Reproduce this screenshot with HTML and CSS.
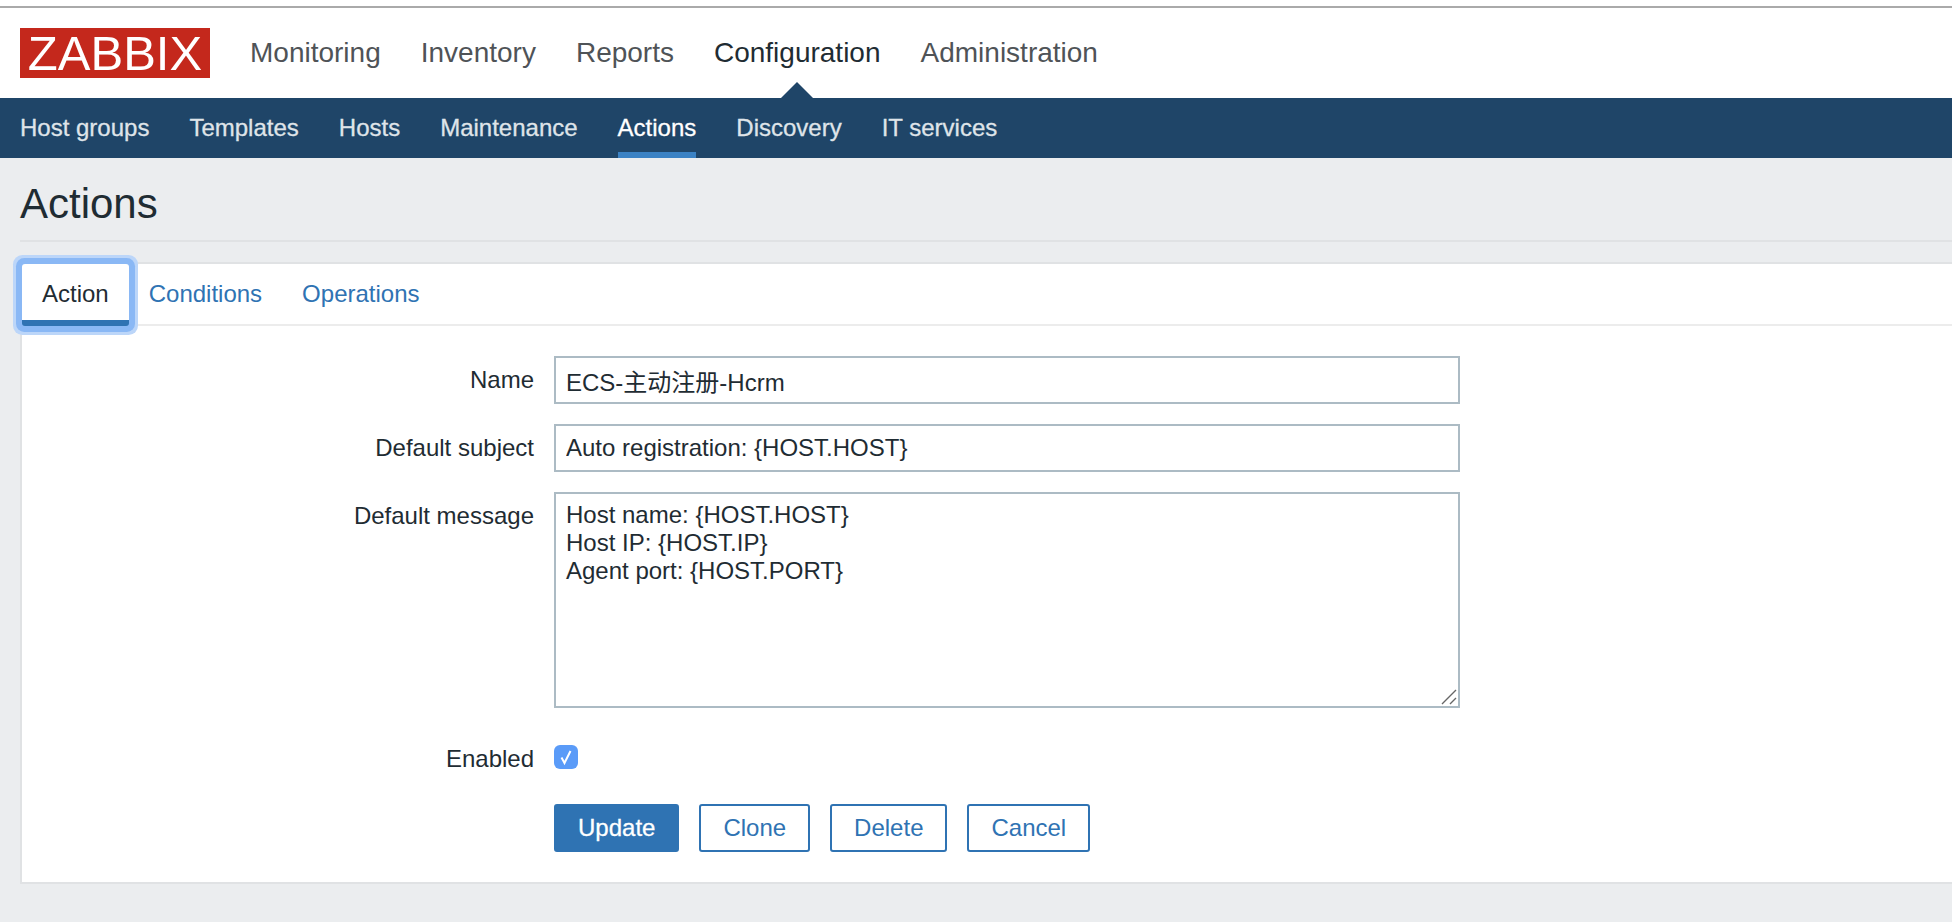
FILE: index.html
```html
<!DOCTYPE html>
<html lang="en">
<head>
  <meta charset="UTF-8" />
  <title>Configuration of actions</title>
  <link rel="stylesheet" href="styles.css">
</head>
<body>
  <div class="window-edge"></div>

  <header class="top-bar">
    <a class="logo">ZABBIX</a>
    <nav class="main-nav">
      <a>Monitoring</a>
      <a>Inventory</a>
      <a>Reports</a>
      <a class="active">Configuration</a>
      <a>Administration</a>
    </nav>
  </header>

  <nav class="sub-nav">
    <a>Host groups</a>
    <a>Templates</a>
    <a>Hosts</a>
    <a>Maintenance</a>
    <a class="active">Actions</a>
    <a>Discovery</a>
    <a>IT services</a>
  </nav>

  <main class="content">
    <h1 class="page-title">Actions</h1>

    <section class="panel">
      <div class="tabs">
        <a class="tab active">Action</a>
        <a class="tab">Conditions</a>
        <a class="tab">Operations</a>
      </div>

      <form class="action-form">
        <label class="field-label">Name</label>
        <input class="field" type="text" value="ECS-主动注册-Hcrm">

        <label class="field-label">Default subject</label>
        <input class="field" type="text" value="Auto registration: {HOST.HOST}">

        <label class="field-label">Default message</label>
        <div class="message-wrap">
          <textarea class="field field-message">Host name: {HOST.HOST}
Host IP: {HOST.IP}
Agent port: {HOST.PORT}</textarea>
          <svg class="grip" viewBox="0 0 16 16" width="16" height="16">
            <path d="M1 15 L15 1 M9 15 L15 9" fill="none" stroke="#666" stroke-width="1.4"/>
          </svg>
        </div>

        <label class="field-label enabled-label">Enabled</label>
        <span class="checkbox">
          <svg viewBox="0 0 24 24" width="24" height="24">
            <path d="M7.5 12.5 L10.5 18 L16.5 6" fill="none" stroke="#fff" stroke-width="2"/>
          </svg>
        </span>

        <div class="buttons">
          <button type="button" class="btn btn-primary">Update</button>
          <button type="button" class="btn">Clone</button>
          <button type="button" class="btn">Delete</button>
          <button type="button" class="btn">Cancel</button>
        </div>
      </form>
    </section>
  </main>
</body>
</html>
```

FILE: styles.css
```css
* { box-sizing: border-box; }
html, body { height: 100%; }
body { margin: 0; font-family: "Liberation Sans", Arial, "Noto Sans CJK SC", sans-serif; font-size: 24px; color: #1f2c33; background: #ebedef; overflow: hidden; }

.window-edge { height: 8px; background: #fff; border-bottom: 2px solid #aaa; }

.top-bar { display: flex; align-items: center; height: 90px; padding-left: 20px; background: #fff; }
.logo { display: block; width: 190px; height: 50px; background: #c4281c; color: #fff; font-size: 49px; line-height: 50px; text-align: center; }
.main-nav { display: flex; align-self: stretch; margin-left: 20px; }
.main-nav a { position: relative; display: flex; align-items: center; padding: 0 20px; font-size: 28px; color: #4f5357; }
.main-nav a.active { color: #1f2c33; }
.main-nav a.active::after { content: ""; position: absolute; left: 50%; bottom: 0; margin-left: -16px; border-left: 16px solid transparent; border-right: 16px solid transparent; border-bottom: 16px solid #1f4568; }

.sub-nav { display: flex; height: 60px; padding-left: 20px; gap: 40px; background: #1f4568; }
.sub-nav a { height: 60px; line-height: 60px; color: #dfe4e9; -webkit-text-stroke: 0.3px; }
.sub-nav a.active { color: #fff; border-bottom: 6px solid #3b82c4; }

.content { padding-left: 20px; }
.page-title { margin: 0 0 20px; padding: 21px 0 11px; font-size: 42px; line-height: 50px; font-weight: normal; border-bottom: 2px solid #e0e2e4; }

.panel { background: #fff; border: 2px solid #e0e2e4; border-right: 0; padding-bottom: 30px; }
.tabs { display: flex; height: 62px; border-bottom: 2px solid #ececec; }
.tab { height: 60px; padding: 0 20px; line-height: 60px; color: #2f73b3; }
.tab.active { position: relative; height: 62px; color: #1f2c33; background: #fff; border-bottom: 6px solid #2f73b3; border-radius: 3px; box-shadow: 0 0 0 6px #8ab8f5, 0 0 0 9px #bcd6f9; }

.action-form { display: grid; grid-template-columns: 512px 906px; column-gap: 20px; row-gap: 20px; padding-top: 30px; }
.field-label { text-align: right; line-height: 48px; }
.field { display: block; width: 100%; height: 48px; padding: 0 10px; border: 2px solid #acbbc4; border-radius: 0; outline: 0; background: #fff; color: #1f2c33; font: inherit; }
.message-wrap { position: relative; }
.field-message { height: 216px; padding-top: 7px; line-height: 28px; resize: none; }
.grip { position: absolute; right: 3px; bottom: 3px; }
.enabled-label { margin-top: 17px; line-height: 28px; }
.checkbox { display: block; width: 24px; height: 24px; margin-top: 17px; border-radius: 6px; background: #5a9bf8; }
.checkbox svg { display: block; }

.buttons { grid-column: 2; display: flex; gap: 20px; margin-top: 11px; }
.btn { height: 48px; padding: 0 22px; border: 2px solid #2f73b3; border-radius: 3px; background: #fff; color: #2f73b3; font: inherit; }
.btn-primary { background: #2f73b3; color: #fff; -webkit-text-stroke: 0.3px; }
```
